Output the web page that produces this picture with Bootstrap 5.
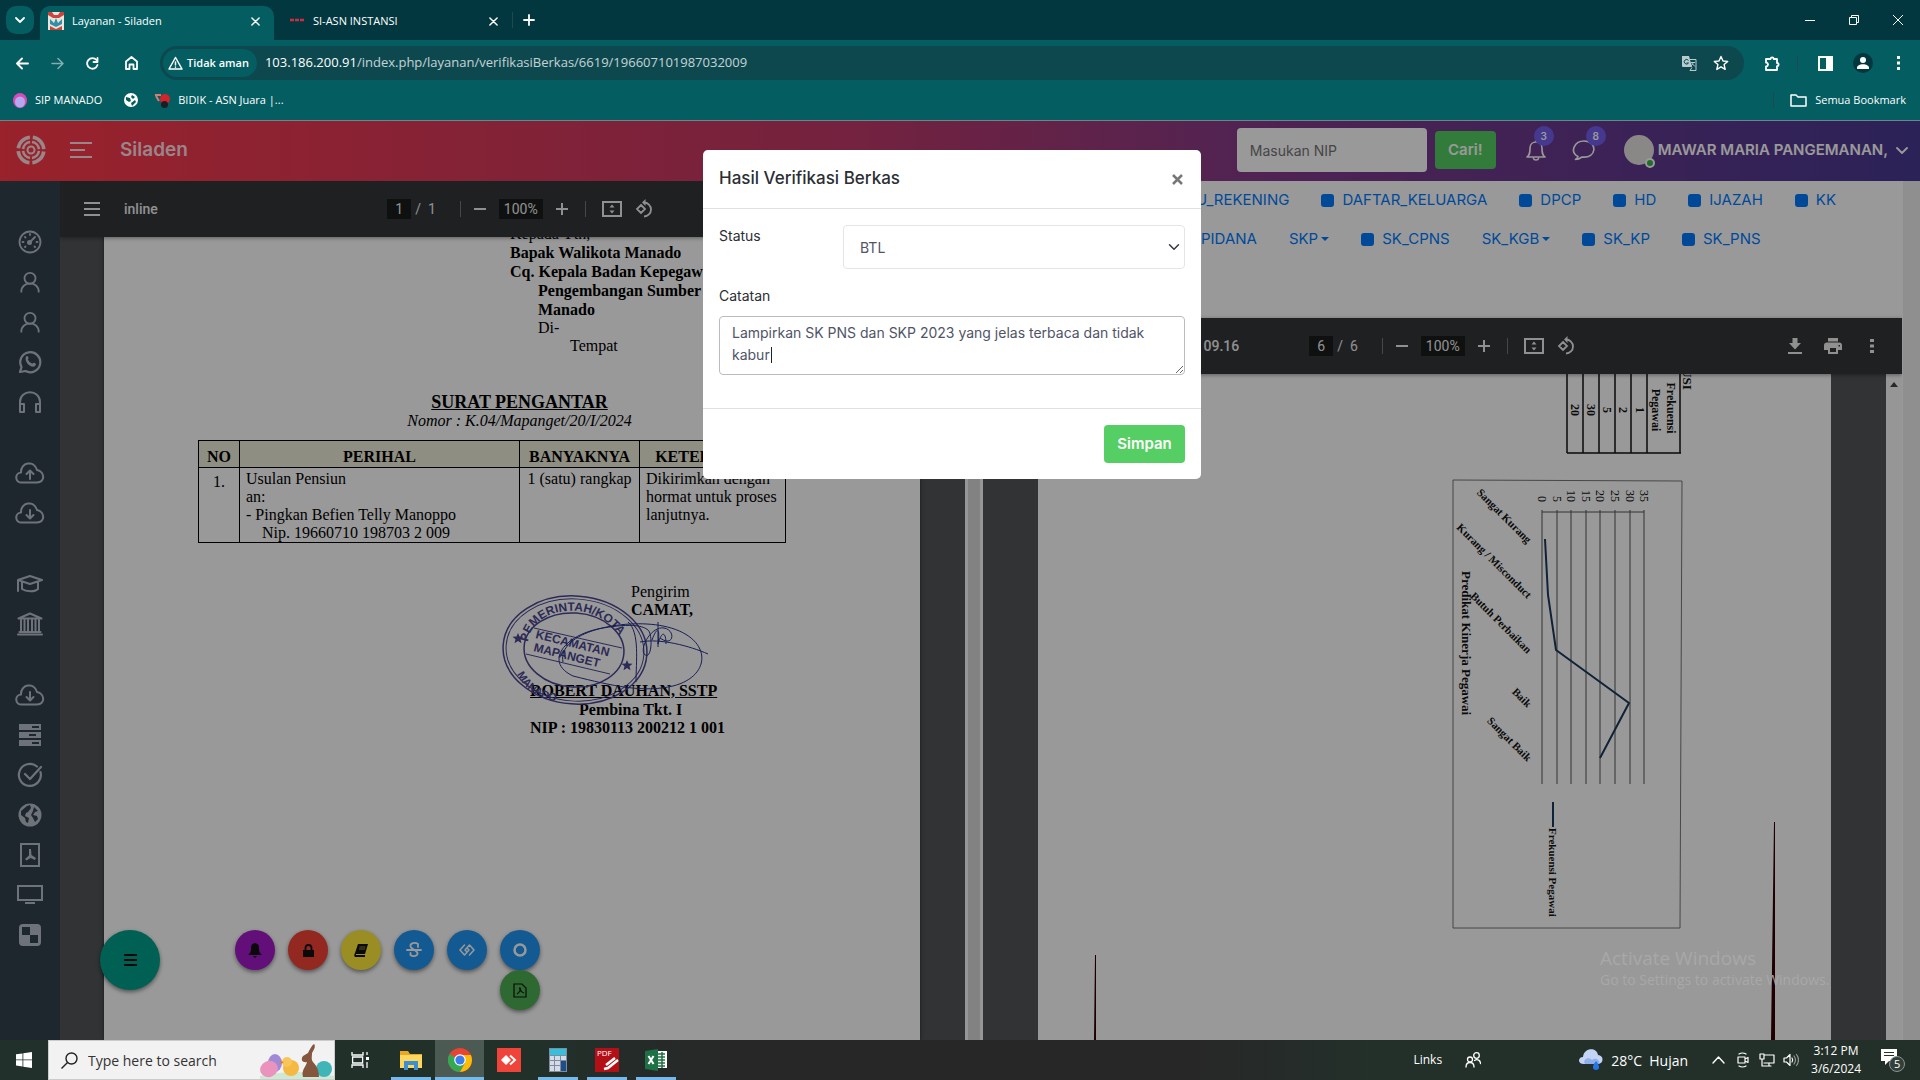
<!DOCTYPE html>
<html lang="id">
<head>
<meta charset="utf-8">
<meta name="viewport" content="width=device-width, initial-scale=1">
<title>Layanan - Siladen</title>
<link href="https://cdn.jsdelivr.net/npm/bootstrap@5.3.0/dist/css/bootstrap.min.css" rel="stylesheet">
<style>
body{font-family:Inter,"Liberation Sans",sans-serif;font-size:14px;overflow:hidden}
button{border:0;background:none;padding:0;color:inherit;display:inline-flex;align-items:center;justify-content:center}
a{text-decoration:none;color:inherit}
svg{display:block;flex:none}
.stroke{fill:none;stroke:currentColor;stroke-linecap:round;stroke-linejoin:round}
.ui{font-family:"Open Sans","Noto Sans",sans-serif;font-size:12px;color:#fff}
/* browser chrome */
.strip{height:40px;background:#03373f}
.tabmenu{width:28px;height:28px;border-radius:10px;background:#045d61;margin:6px 6px 6px 6px}
.tabpill{width:234px;height:34px;margin-top:6px;border-radius:10px 10px 0 0;padding:0 14px 4px 8px;font-size:11px}
.tabpill.on{background:#045d61}
.tabpill.off{width:238px}
.tools{height:40px;background:#045d61;padding:6px 19px 0 16px}
.nb{margin-left:22px}
.omni{height:34px;border-radius:17px;background:#0d484f;padding:0 15px 0 3px}
.chip{height:28px;border-radius:14px;background:#045d61;padding:0 8px 0 5px;font-size:11px;font-weight:600}
.url{font-size:13px}
.marks{height:41px;background:#045d61;border-bottom:1px solid #6d8588;padding:0 14px 0 13px;font-size:11px}
.bar1{width:1px;height:16px;background:#1d4a50}
/* application */
.appbar{height:60px;padding-bottom:2px;background:linear-gradient(90deg,#ff3a48 0,#c03a6a 45%,#843b8b 66%,#483993 100%);color:#fff}
.brand{font-size:19px;font-weight:600;color:#ffdfe4}
.nip{width:190px;height:44px;border:0;border-radius:4px;padding:0 13px;font-size:14px}
.cari{width:61px;height:38px;border-radius:4px;background:#55ce63;color:#fff;font-weight:600;font-size:15px}
.who{font-size:15px;font-weight:600}
.cnt{width:20px;height:20px;border-radius:50%;background:#7460ee;font-size:10px;font-weight:600;top:-20px;left:6px}
.face{width:30px;height:30px;border-radius:50%;background:#e6e3e0}
.dot{width:10px;height:10px;border-radius:50%;background:#39b54a;border:2px solid #fff;right:-1px;bottom:-3px}
.side{width:60px;background:#35414e;color:#b6c0c9;padding-top:41px;gap:31px}
.side a{height:40px;display:flex;align-items:center;justify-content:center}
.viewer{background:#525659;min-width:0;min-height:0}
.wide-l{flex:905 1 0}.wide-r{flex:919 1 0}
.pdfbar{height:56px;background:#323639;color:#f1f1f1;font-family:Roboto,sans-serif;font-size:14px;box-shadow:0 1px 4px #0006;flex:none}
.pdfbar .sidepart{flex:1 1 0;min-width:0}
.pbox{background:#191b1c;border:0;color:#f1f1f1;height:20px;text-align:center;font-size:14px;padding:0}
.pg{width:24px}.zm{width:44px;margin:0 8px 0 12px}
.pdfbar .sep{width:1px;height:16px;background:#777}
.docname{margin-right:70px}
.sheet{background:#fff;flex:none}
.letter{width:816px;margin-left:44px;font-family:"Liberation Serif",serif;font-size:16px;line-height:18px;color:#000;box-shadow:0 0 4px #0008}
.addrblock{margin-left:406px;line-height:19px;margin-top:-13px}
.in1{margin-left:28px}.in2{margin-left:60px}.in1.tight,.in2.tight{line-height:18px}
.lettitle{margin-top:38px;text-align:center;padding-left:15px}
.lettitle b{font-size:18px}
.lettable{width:588px;margin:10px 0 0 94px;border-collapse:collapse;table-layout:fixed}
.lettable th,.lettable td{border:1px solid #000;padding:0 6px;vertical-align:top;white-space:nowrap}
.lettable th{height:27px;padding-top:7px;background:#eeedd9;text-align:center;line-height:18px}
.lettable td{height:75px;line-height:18px;padding-top:2px}
.lettable td.num{padding-top:5px;text-align:center}
.c1{width:41px}.c2{width:280px}.c3{width:120px}
.sign{margin:40px 0 0 426px}
.sender{margin-left:101px}.signer{margin-top:63px}.rank{padding-left:49px;line-height:19px}
.stamp{left:-40px;top:-6px}
.fabs{left:100px;top:809px}
.fabrow{gap:13px;margin-left:75px}
.fab{width:40px;height:40px;border-radius:50%;box-shadow:0 2px 4px #0007;color:#111}
.fab.big{width:60px;height:60px;background:#00a08a}
.f-purple{background:#a31acb}.f-red{background:#f44336}.f-yellow{background:#ffeb3b}.f-blue{background:#2196f3;color:#fff}.f-green{background:#4caf50}
.split{width:18px;background:#fafafa}
.split div{width:12px;height:100%;background:#d9d9d9;margin-left:3px}
.doclinks{height:137px;background:#fff;color:#007bff;font-size:15px}
.doclinks .line{height:38px;gap:32px;padding-left:161px}
.doclinks .line.two{padding-left:218px;height:40px}
.doclinks a{display:inline-flex;align-items:center;gap:8px}
.doclinks i{width:13px;height:13px;border-radius:3px;background:#007bff}
.car::after{content:"";border:4px solid transparent;border-top-color:#007bff;border-bottom:0;margin-left:-5px}
.scan{margin-left:55px}
.sbar{width:16px;background:#fbfbfb}
.gutter{width:18px;background:#efefef;border-left:1px solid #fff}
.dim{inset:0;background:rgba(0,0,0,.4);z-index:5}
.layer{position:absolute;inset:0 16px auto 0;z-index:6}
.layer .modal-dialog{max-width:500px;margin-top:29px;padding:0 1px}
.modal-content{border:0;border-radius:5px;color:#2b2f33;background:#fff}
.modal-header,.modal-body,.modal-footer{padding:16px}
.modal-header{height:59px;border-bottom:1px solid #dee2e6;display:flex;justify-content:space-between}
.modal-title{font-size:17px;font-weight:500}
.modal-body{height:199px}
.modal-footer{height:71px;border-top:1px solid #dee2e6;display:flex;justify-content:flex-end}
.modal-footer button{margin:0;width:81px;height:38px;border-radius:4px;background:#55ce63;color:#fff;font-weight:600;font-size:15px}
.sel{width:342px;height:44px;font-size:14px;color:#4f5467;border-color:#e3e6e9;padding-left:16px;background-position:right 4px center;background-size:12px 12px;border-radius:4px}
.note{height:59px;font-size:14px;line-height:22px;color:#4f5467;border-color:#b9bcc0;padding:5px 12px;border-radius:4px;overflow:hidden}
.notewrap{margin-top:10px}
.cursor{width:1px;height:16px;background:#222;left:52px;top:31px}
.ghost{right:70px;bottom:49px;z-index:7;color:#a8a8a8;font-size:14px;width:250px;line-height:22px}
.ghost b{font-weight:400;font-size:19px;display:block}
/* taskbar */
.task{height:40px;background:linear-gradient(90deg,#21302a 0,#22302a 28%,#272727 38%,#272727 62%,#23302a 72%,#23302a 100%);font-size:12px}
.start{width:48px}
.find{width:287px;height:40px;background:#f2f2f2;color:#444;border:1px solid #ccc;padding-left:12px}
.find input{border:0;background:none;outline:0;width:150px;font-size:14px;color:#333}
.find input::placeholder{color:#333;opacity:1}
.app{width:49px;height:40px;border-bottom:3px solid transparent;padding-top:3px}
.app.view{margin-right:2px}
.app.run{background:linear-gradient(#76b9ed,#76b9ed) center bottom/40px 3px no-repeat border-box}
.app.now{background:#4b5b54;border-bottom-color:#76b9ed}
.temp{font-size:14px}
.time{font-size:12px;line-height:18px;margin-left:12px}
.g10{margin-left:10px}.g12{margin-left:12px}.g23{margin-left:23px}.g99{margin-left:98px}
.notif{margin:0 15px 0 20px}
</style>
<script src="https://cdn.jsdelivr.net/npm/bootstrap@5.3.0/dist/js/bootstrap.bundle.min.js"></script>
</head>
<body>
<svg width="0" height="0" class="position-absolute">
<defs>
<symbol id="x" viewBox="0 0 10 10"><path class="stroke" stroke-width="1.6" d="M1 1l8 8M9 1L1 9"/></symbol>
<symbol id="user" viewBox="0 0 24 24"><g class="stroke" stroke-width="2"><circle cx="12" cy="8" r="6"/><path d="M2.500 22.500c0-12 19-12 19 0"/></g></symbol>
<symbol id="cloud" viewBox="0 0 30 22"><path class="stroke" stroke-width="2" d="M7 20.500C-.5 20.500-.5 11 6 10.500 5.500.500 19-2.500 22 8c8 1.500 8.500 12.500 0 12.500z"/></symbol>
<symbol id="fit" viewBox="0 0 20 20"><path fill="none" stroke="currentColor" stroke-width="2" d="M1 3h18v14H1z"/><path fill="currentColor" d="M10 5.500l2.500 3h-5zM10 14.500l2.500-3h-5z"/></symbol>
<symbol id="rot" viewBox="0 0 20 20"><path fill="none" stroke="currentColor" stroke-width="1.800" d="M7 6l4 4-4 4-4-4zM10 3.500a7 7 0 1 1 0 14"/><path fill="currentColor" d="M11.500 0v7L8 3.500z"/></symbol>
</defs></svg>
<div class="d-flex flex-column vh-100">

<div class="ui">
 <div class="strip d-flex align-items-start">
  <button class="tabmenu" aria-label="Cari tab"><svg width="10" height="7" viewBox="0 0 10 7"><path class="stroke" stroke-width="1.800" d="M1 1l4 4 4-4"/></svg></button>
  <div class="tabpill on d-flex align-items-center">
   <svg width="16" height="18" viewBox="0 0 16 18"><path fill="#e8e6dc" d="M0 0h16v18H0z"/><path fill="#c9463f" d="M0 0h4l2 3h4l2-3h4v3l-5 3H5L0 3zM2 14l6 3 6-3v4H2z"/><path fill="#2f8fa8" d="M2 7l4 4 2-5 2 5 4-4v5l-6 3-6-3z"/></svg>
   <span class="ms-2 flex-grow-1">Layanan - Siladen</span><button aria-label="Tutup"><svg width="9" height="9"><use href="#x"/></svg></button></div>
  <div class="tabpill off d-flex align-items-center ps-3">
   <svg width="15" height="6" viewBox="0 0 15 6"><path stroke="#c8303f" stroke-width="2.500" stroke-dasharray="4 1" d="M0 2h15"/></svg>
   <span class="ms-2 flex-grow-1">SI-ASN INSTANSI</span><button aria-label="Tutup"><svg width="9" height="9"><use href="#x"/></svg></button></div>
  <span class="bar1 align-self-center"></span>
  <button class="align-self-center g10" aria-label="Tab baru"><svg width="12" height="12" viewBox="0 0 12 12"><path class="stroke" stroke-width="1.800" d="M6 1v10M1 6h10"/></svg></button>
  <div class="d-flex ms-auto align-self-center gap-4 pe-3">
   <button class="me-2" aria-label="Perkecil"><svg width="12" height="12" viewBox="0 0 12 12"><path stroke="#fff" d="M1 6.500h10"/></svg></button>
   <button class="me-2" aria-label="Pulihkan"><svg width="12" height="12" viewBox="0 0 12 12"><path fill="none" stroke="#fff" d="M1.500 3.500h7v7h-7zM3.500 3V1.500h7v7H9"/></svg></button>
   <button aria-label="Tutup jendela"><svg width="12" height="12" viewBox="0 0 12 12"><path stroke="#fff" d="M1 1l10 10M11 1L1 11"/></svg></button>
  </div>
 </div>
 <div class="tools d-flex align-items-center">
  <button aria-label="Kembali"><svg width="13" height="13" viewBox="0 0 13 13"><path class="stroke" stroke-width="1.800" d="M12 6.500H1.500M6 1.500l-5 5 5 5"/></svg></button>
  <button class="nb opacity-50" aria-label="Maju"><svg width="13" height="13" viewBox="0 0 13 13"><path class="stroke" stroke-width="1.500" d="M1 6.500h10.500M7 1.500l5 5-5 5"/></svg></button>
  <button class="nb" aria-label="Muat ulang"><svg width="13" height="13" viewBox="0 0 13 13"><path class="stroke" stroke-width="1.800" d="M11.500 8A5.300 5.300 0 1 1 10.500 3M11.500 1v4h-4"/></svg></button>
  <button class="nb ps-1" aria-label="Beranda"><svg width="13" height="14" viewBox="0 0 13 14"><path class="stroke" stroke-width="1.800" d="M1 13V5.500L6.500 1 12 5.500V13H8.500V8.500h-4V13z"/></svg></button>
  <div class="omni d-flex align-items-center flex-grow-1 nb">
   <span class="chip d-flex align-items-center gap-1"><svg width="15" height="14" viewBox="0 0 15 14"><path class="stroke" stroke-width="1.500" d="M7.500 1.500L14 13H1zM7.500 6v3M7.500 11v.2"/></svg>Tidak aman</span>
   <span class="url ms-2 flex-grow-1">103.186.200.91<span class="opacity-75">/index.php/layanan/verifikasiBerkas/6619/196607101987032009</span></span>
   <svg width="16" height="16" viewBox="0 0 16 16"><path fill="#b9cccd" d="M1 1h7l3 11H2a1 1 0 0 1-1-1z"/><path fill="none" stroke="#b9cccd" d="M8.500 4.500H15v11H9l2-3M10 7.500h4M12 7c0 2-1 3-2 4M11 8.500l3 3"/><path fill="none" stroke="#0d484f" d="M7.500 5.500A2.300 2.300 0 1 0 7.500 8H5.500"/></svg>
   <button class="ms-3" aria-label="Tandai"><svg width="16" height="16" viewBox="0 0 16 16"><path class="stroke" stroke-width="1.400" d="M8 1.500l2 4.500 4.700.400-3.600 3.200 1.100 4.800L8 11.800l-4.200 2.600 1.100-4.800L1.300 6.400 6 6z"/></svg></button>
  </div>
  <button class="ms-3 ps-1" aria-label="Ekstensi"><svg width="17" height="17" viewBox="0 0 17 17"><path class="stroke" stroke-width="1.800" d="M2 4h4.500a1.600 1.600 0 0 1 3.200 0H13v4a1.600 1.600 0 0 1 0 3.200V15H2v-3.500a2 2 0 0 0 0-4z"/></svg></button>
  <span class="bar1 ms-3 me-3"></span>
  <button class="ms-1" aria-label="Panel"><svg width="15" height="15" viewBox="0 0 15 15"><path fill="none" stroke="#fff" stroke-width="2" d="M1 1h13v13H1z"/><path fill="#fff" d="M8 1h6v13H8z"/></svg></button>
  <button class="ms-3 me-3 ps-1" aria-label="Profil"><svg width="20" height="20" viewBox="0 0 20 20"><circle cx="10" cy="10" r="10" fill="#03373f"/><circle cx="10" cy="7" r="3" fill="#fff"/><path fill="#fff" d="M4 15c0-5 12-5 12 0v1H4z"/></svg></button>
  <button class="ms-2" aria-label="Menu"><svg width="4" height="14" viewBox="0 0 4 14"><path fill="#fff" d="M0 0h3v3H0zM0 5.500h3v3H0zM0 11h3v3H0z"/></svg></button>
 </div>
 <div class="marks d-flex align-items-center">
  <svg width="14" height="15" viewBox="0 0 14 15"><ellipse cx="7" cy="7.500" rx="7" ry="7.500" fill="#d84bb9"/><ellipse cx="7" cy="9" rx="5" ry="5.500" fill="#b6a8ee"/></svg><a class="ms-2" href="#">SIP MANADO</a>
  <svg class="nb" width="14" height="14" viewBox="0 0 14 14"><circle cx="7" cy="7" r="7" fill="#fff"/><path fill="#045d61" d="M2 4l4 1 1 3-2 1-3-2zM8 2l3 2-2 2-2-2zM7 10l4-3 1 2-4 4z"/></svg>
  <svg class="ms-3" width="16" height="15" viewBox="0 0 16 15"><circle cx="11" cy="6" r="5" fill="#d3242b"/><path fill="none" stroke="#d77c74" stroke-width="2" d="M1 2h6M2 3l3 5"/><circle cx="10.500" cy="11.500" r="3.500" fill="#181e22"/></svg><a class="ms-2" href="#">BIDIK - ASN Juara |...</a>
  <span class="bar1 ms-auto me-3"></span>
  <svg width="17" height="13" viewBox="0 0 17 13"><path class="stroke" stroke-width="1.500" d="M1 1h5l2 2h8v9H1z"/></svg><a class="ms-2" href="#">Semua Bookmark</a>
 </div>
</div>

<div class="position-relative flex-grow-1 d-flex flex-column overflow-hidden">
 <header class="appbar d-flex align-items-center flex-shrink-0">
  <svg class="ms-3" width="30" height="30" viewBox="0 0 30 30" fill="none" stroke="#ffdfe4"><circle cx="15" cy="15" r="12.800" stroke-width="3.600" stroke-dasharray="17.100 3" stroke-dashoffset="-1.500"/><circle cx="15" cy="15" r="8" stroke-width="2.600" stroke-dasharray="10.500 2" stroke-dashoffset="-1"/><circle cx="15" cy="15" r="3.500" stroke-width="2"/></svg>
  <button class="ms-4" aria-label="Menu"><svg width="22" height="18" viewBox="0 0 22 18"><path stroke="#ffdfe4" stroke-width="2" d="M0 2h22M0 9h15M0 16h22"/></svg></button>
  <a class="brand ms-4 ps-1" href="#">Siladen</a>
  <form class="ms-auto d-flex align-items-center gap-2" onsubmit="return false"><input class="nip" placeholder="Masukan NIP" aria-label="Masukan NIP"><button class="cari">Cari!</button></form>
  <button class="position-relative ms-4 ps-1" aria-label="Notifikasi"><svg width="24" height="24" viewBox="0 0 24 24"><path class="stroke" stroke-width="1.600" d="M3 19c3-2 3-5 3-9 0-8 12-8 12 0 0 4 0 7 3 9zM9.500 20.500c.5 2 4.500 2 5 0M12 2v2"/></svg><span class="cnt position-absolute d-flex align-items-center justify-content-center ms-2 mt-2">3</span></button>
  <button class="position-relative ms-4" aria-label="Pesan"><svg width="24" height="24" viewBox="0 0 24 24"><path class="stroke" stroke-width="1.600" d="M6 18.500c-9-5-3-15.500 6-15.500 14 0 13 18-2 16-2 1.500-4 2.500-6.500 2.500C5 20.500 6 19.500 6 18.500z"/></svg><span class="cnt position-absolute d-flex align-items-center justify-content-center ms-2 mt-2">8</span></button>
  <a class="who d-flex align-items-center ms-4 me-2 ps-1" href="#"><span class="face position-relative me-1"><span class="dot position-absolute"></span></span>MAWAR MARIA PANGEMANAN,<svg class="ms-2 me-1" width="12" height="7" viewBox="0 0 12 7"><path class="stroke" stroke-width="1.800" d="M1 1l5 5 5-5"/></svg></a>
 </header>
 <div class="d-flex flex-grow-1 overflow-hidden">
  <nav class="side d-flex flex-column flex-shrink-0">
   <div>
    <a href="#" aria-label="Dasbor"><svg width="24" height="24" viewBox="0 0 24 24"><g class="stroke" stroke-width="1.800"><circle cx="12" cy="12" r="10.500"/><path d="M11 13l6-6M12 4v1M4.500 12h1M18.500 12h1M7 7l.5.5M7 17l.5-.5M17 17l-.5-.5"/></g><circle cx="11.500" cy="12.500" r="2.500" fill="currentColor"/></svg></a>
    <a href="#" aria-label="Pengguna"><svg width="22" height="22"><use href="#user"/></svg></a>
    <a href="#" aria-label="Pegawai"><svg width="22" height="22"><use href="#user"/></svg></a>
    <a href="#" aria-label="WhatsApp"><svg width="24" height="24" viewBox="0 0 24 24"><path class="stroke" stroke-width="2.200" d="M2 22l1.500-5A10 10 0 1 1 7.500 21z"/><path fill="currentColor" d="M8 6.500c1-1 2-.5 2.500 1.200.3 1-1 1.500-.5 2.300a8 8 0 0 0 4 3.500c.8.300 1.200-1 2-.7 2.500 1 2 1.500 1.500 2.700-3 4-12-3-9.500-9z"/></svg></a>
    <a href="#" aria-label="Bantuan"><svg width="24" height="24" viewBox="0 0 24 24"><path class="stroke" stroke-width="2" d="M2 22V12C2-1 22-1 22 12v10h-4v-8h4M2 14h4v8H2"/></svg></a>
   </div>
   <div>
    <a href="#" aria-label="Unggah"><svg width="30" height="22" viewBox="0 0 30 22"><use href="#cloud"/><path class="stroke" stroke-width="2" d="M15 17V9M11.500 12L15 8.500l3.500 3.500"/></svg></a>
    <a href="#" aria-label="Unduh"><svg width="30" height="22" viewBox="0 0 30 22"><use href="#cloud"/><path class="stroke" stroke-width="2" d="M15 8v8M11.500 13l3.500 3.500 3.500-3.500"/></svg></a>
   </div>
   <div>
    <a href="#" aria-label="Pendidikan"><svg width="28" height="18" viewBox="0 0 28 18"><path class="stroke" stroke-width="2" d="M2 5l12-4 12 4-12 4zM6 7v7c4 3 13 3 16 0V7M2 5v11"/></svg></a>
    <a href="#" aria-label="Instansi"><svg width="26" height="24" viewBox="0 0 26 24"><path class="stroke" stroke-width="2" d="M1.500 6.500L13 1.500l11.500 5zM4 8v11M7.500 8v11M11 8v11M15 8v11M18.500 8v11M22 8v11M2.500 20h21M1 22.500h24"/></svg></a>
   </div>
   <div>
    <a href="#" aria-label="Unduh berkas"><svg width="30" height="22" viewBox="0 0 30 22"><use href="#cloud"/><path class="stroke" stroke-width="2" d="M15 8v8M11.500 13l3.500 3.500 3.500-3.500"/></svg></a>
    <a href="#" aria-label="Server"><svg width="22" height="22" viewBox="0 0 22 22"><path fill="currentColor" fill-rule="evenodd" d="M0 0h22v6H0zM0 8h22v6H0zM0 16h22v6H0zM13 2v2h7V2zM10 10v2h7v-2zM13 18v2h7v-2z"/></svg></a>
    <a href="#" aria-label="Verifikasi"><svg width="26" height="26" viewBox="0 0 26 26"><path class="stroke" stroke-width="2.200" d="M23.500 10A11 11 0 1 1 20 4.500M8 12l5 5L24 5"/></svg></a>
    <a href="#" aria-label="Situs"><svg width="24" height="24" viewBox="0 0 24 24"><circle cx="12" cy="12" r="11.500" fill="currentColor"/><path fill="#35414e" d="M9 3l3-1 1 3-3 4-2 1-1 3 4 2-1 5-2-1-1-4-4-3 0-4zM16 4l4 4-3 1-2 3 4 1 1 3-3 3-2-4-2-3 2-4z"/></svg></a>
    <a href="#" aria-label="PDF"><svg width="20" height="24" viewBox="0 0 20 24"><path fill="none" stroke="currentColor" stroke-width="2" d="M1 1h18v22H1z"/><path fill="currentColor" d="M9 6h2l.5 6 4.500 3-1 2-4.500-2-4 2.500-1.500-1.500 4-3.500z"/></svg></a>
    <a href="#" aria-label="Monitor"><svg width="26" height="20" viewBox="0 0 26 20"><path fill="none" stroke="currentColor" stroke-width="2" d="M1 1h24v14H1zM8 18h10"/></svg></a>
    <a href="#" aria-label="Modul"><svg width="22" height="22" viewBox="0 0 22 22"><rect width="22" height="22" rx="4" fill="currentColor"/><path fill="#35414e" d="M3 3h8v8H3zM11 11h8v8h-8z"/></svg></a>
   </div>
  </nav>
  <!-- left document -->
  <section class="viewer wide-l d-flex flex-column position-relative overflow-hidden">
   <div class="pdfbar d-flex align-items-center position-relative z-1">
    <div class="sidepart d-flex align-items-center"><svg class="ms-4" width="16" height="14" viewBox="0 0 16 14"><path stroke="currentColor" stroke-width="2" d="M0 1h16M0 7h16M0 13h16"/></svg><span class="ms-4 fw-medium">inline</span></div>
    <div class="d-flex align-items-center ms-3"><input class="pbox pg" value="1" aria-label="Halaman"><span class="ms-1">/&nbsp; 1</span><span class="sep ms-4"></span>
     <button class="ms-2 ps-1" aria-label="Perkecil"><svg width="14" height="14" viewBox="0 0 14 14"><path stroke="currentColor" stroke-width="2" d="M1 7h12"/></svg></button>
     <input class="pbox zm" value="100%" aria-label="Zoom"><button class="ps-1" aria-label="Perbesar"><svg width="14" height="14" viewBox="0 0 14 14"><path stroke="currentColor" stroke-width="2" d="M1 7h12M7 1v12"/></svg></button>
     <span class="sep ms-3"></span><button class="ms-3" aria-label="Pas"><svg width="20" height="20"><use href="#fit"/></svg></button><button class="g12" aria-label="Putar"><svg width="20" height="20"><use href="#rot"/></svg></button></div>
    <div class="sidepart"></div>
   </div>
   <div class="sheet letter flex-grow-1">
    <div class="addrblock">Kepada Yth,<div class="fw-bold">Bapak Walikota Manado<br>Cq. Kepala Badan Kepegaw</div><div class="fw-bold in1">Pengembangan Sumber<br>Manado</div><div class="in1 tight">Di-</div><div class="in2 tight">Tempat</div></div>
    <div class="lettitle"><b class="text-decoration-underline">SURAT PENGANTAR</b><br><i>Nomor : K.04/Mapanget/20/I/2024</i></div>
    <table class="lettable"><colgroup><col class="c1"><col class="c2"><col class="c3"><col></colgroup>
     <tr><th>NO</th><th>PERIHAL</th><th>BANYAKNYA</th><th>KETERANGAN</th></tr>
     <tr><td class="num">1.</td><td>Usulan Pensiun<br>an:<br>- Pingkan Befien Telly Manoppo<br><span class="ms-3">Nip. 19660710 198703 2 009</span></td><td class="text-center">1 (satu) rangkap</td><td>Dikirimkan dengan<br>hormat untuk proses<br>lanjutnya.</td></tr></table>
    <div class="sign position-relative">
     <div class="sender">Pengirim<br><b>CAMAT,</b></div>
     <div class="fw-bold signer"><u>ROBERT DAUHAN, SSTP</u><div class="rank">Pembina Tkt. I</div>NIP : 19830113 200212 1 001</div>
     <svg class="stamp position-absolute" width="240" height="140" viewBox="490 575 240 140" fill="none" stroke="#4a4690" font-family="Liberation Sans" font-weight="bold">
      <defs><path id="arcB" d="M517 672C530 698 560 706 600 697"/></defs>
      <ellipse cx="575" cy="648" rx="72" ry="54" transform="rotate(4 575 648)" stroke-width="1.500"/><ellipse cx="575" cy="648" rx="69" ry="51" transform="rotate(4 575 648)" stroke-width="1"/><ellipse cx="574" cy="648" rx="50" ry="37" transform="rotate(4 574 648)" stroke-width="1.500"/>
      <path d="M534 626l88 20M526 652l84 20"/>
      <g fill="#4a4690" stroke="none"><path id="arcP" d="M528 640C532 598 622 590 632 668" fill="none"/><text font-size="12"><textPath href="#arcP">PEMERINTAH/KOTA</textPath></text><text font-size="11"><textPath href="#arcB">MANADO</textPath></text><text font-size="12" transform="translate(535 636) rotate(14)">KECAMATAN</text><text font-size="12" transform="translate(533 649) rotate(14)">MAPANGET</text><path d="M518 631l1.500 3.500 4 .200-3 2.600 1 4-3.500-2.200-3.500 2.200 1-4-3-2.600 4-.200zM627 658l1.500 3.500 4 .200-3 2.600 1 4-3.500-2.200-3.500 2.200 1-4-3-2.600 4-.200z"/></g>
      <path stroke="#28338c" d="M563 660c-6-30 60-44 100-36 50 10 50 50 10 60-30 7-60 0-100-10-30-14-8-42 30-48 30-5 40-2 45 2s4 32-4 24c-4-8 8-28 20-26s10 20-4 10M658 620v25M652 638c6-16 8-10 6 4 4-14 8-12 8 0M640 640c20-4 50 4 68 12M628 620c12 10 8 40 8 60"/>
     </svg>
    </div>
   </div>
  </section>
  <div class="split flex-shrink-0"><div></div></div>
  <!-- right document -->
  <section class="wide-r d-flex flex-column overflow-hidden">
   <nav class="doclinks flex-shrink-0">
    <div class="line d-flex align-items-center"><a href="#"><i></i>BUKU_REKENING</a><a href="#"><i></i>DAFTAR_KELUARGA</a><a href="#"><i></i>DPCP</a><a href="#"><i></i>HD</a><a href="#"><i></i>IJAZAH</a><a href="#"><i></i>KK</a></div>
    <div class="line two d-flex align-items-center"><a href="#">PIDANA</a><a class="car" href="#">SKP</a><a href="#"><i></i>SK_CPNS</a><a class="car" href="#">SK_KGB</a><a href="#"><i></i>SK_KP</a><a href="#"><i></i>SK_PNS</a></div>
   </nav>
   <div class="pdfbar d-flex align-items-center position-relative z-1">
    <div class="sidepart text-end fw-medium"><span class="docname">09.16</span></div>
    <div class="d-flex align-items-center"><input class="pbox pg" value="6" aria-label="Halaman"><span class="ms-1">/&nbsp; 6</span><span class="sep ms-4"></span>
     <button class="ms-2 ps-1" aria-label="Perkecil"><svg width="14" height="14" viewBox="0 0 14 14"><path stroke="currentColor" stroke-width="2" d="M1 7h12"/></svg></button>
     <input class="pbox zm" value="100%" aria-label="Zoom"><button class="ps-1" aria-label="Perbesar"><svg width="14" height="14" viewBox="0 0 14 14"><path stroke="currentColor" stroke-width="2" d="M1 7h12M7 1v12"/></svg></button>
     <span class="sep ms-3"></span><button class="ms-3" aria-label="Pas"><svg width="20" height="20"><use href="#fit"/></svg></button><button class="g12" aria-label="Putar"><svg width="20" height="20"><use href="#rot"/></svg></button></div>
    <div class="sidepart d-flex justify-content-end align-items-center">
     <button aria-label="Unduh"><svg width="14" height="16" viewBox="0 0 14 16"><path fill="currentColor" d="M4.500 0h5v5H13l-6 6.500L1 5h3.500zM0 14h14v2H0z"/></svg></button>
     <button class="nb me-4" aria-label="Cetak"><svg width="18" height="16" viewBox="0 0 18 16"><path fill="currentColor" fill-rule="evenodd" d="M4 0h10v3.500H4zM3 4.500h12a3 3 0 0 1 3 3V12h-4v4H4v-4H0V7.500a3 3 0 0 1 3-3zM6 10v4h6v-4zM14.500 7v1.500H16V7z"/></svg></button>
     <button class="ms-1 me-4 pe-1" aria-label="Lainnya"><svg width="4" height="14" viewBox="0 0 4 14"><path fill="currentColor" d="M0 0h4v3H0zM0 5.500h4v3H0zM0 11h4v3H0z"/></svg></button></div>
   </div>
   <div class="viewer d-flex flex-grow-1 overflow-hidden">
    <svg class="sheet scan" width="793" height="666" viewBox="1038 374 793 666" font-family="Liberation Serif" font-size="12" font-weight="bold" fill="#111">
     <g fill="none" stroke="#111" stroke-width="1.500"><path d="M1567 374v79M1583 374v79M1599 374v79M1615 374v79M1631 374v79M1647 374v79M1680 374v79M1567 453h114"/></g>
     <g text-anchor="middle"><text transform="translate(1683 379) rotate(90)" font-size="13">USI</text><text transform="translate(1667 408) rotate(90)">Frekuensi</text><text transform="translate(1652 410) rotate(90)">Pegawai</text><text transform="translate(1636 410) rotate(90)">1</text><text transform="translate(1619 410) rotate(90)">2</text><text transform="translate(1603 410) rotate(90)">5</text><text transform="translate(1587 410) rotate(90)">30</text><text transform="translate(1571 410) rotate(90)">20</text></g>
     <path fill="none" stroke="#777" d="M1453 480l229 1-2 447h-227z"/>
     <path fill="none" stroke="#555" d="M1542 510v274M1557 510v274M1571 510v274M1586 510v274M1600 510v274M1615 510v274M1630 510v274M1644 510v274M1542 512h102"/>
     <path fill="none" stroke="#1c3a5c" stroke-width="2" d="M1545 539l3 56 8 55 73 53-29 55M1553 802v25"/>
     <g text-anchor="end" font-size="12" font-weight="normal"><text transform="translate(1538 502) rotate(90)">0</text><text transform="translate(1553 502) rotate(90)">5</text><text transform="translate(1567 502) rotate(90)">10</text><text transform="translate(1582 502) rotate(90)">15</text><text transform="translate(1596 502) rotate(90)">20</text><text transform="translate(1611 502) rotate(90)">25</text><text transform="translate(1626 502) rotate(90)">30</text><text transform="translate(1640 502) rotate(90)">35</text></g>
     <g text-anchor="end" font-size="11"><text transform="translate(1527 544) rotate(45)">Sangat Kurang</text><text transform="translate(1527 599) rotate(45)">Kurang / Misconduct</text><text transform="translate(1527 654) rotate(45)">Butuh Perbaikan</text><text transform="translate(1527 708) rotate(45)">Baik</text><text transform="translate(1527 762) rotate(45)">Sangat Baik</text></g>
     <text transform="translate(1462 571) rotate(90)" font-size="13">Predikat Kinerja Pegawai</text><text transform="translate(1549 828) rotate(90)" font-size="11">Frekuensi Pegawai</text>
     <path fill="#300" d="M1774 822h1v218h-4zM1095 955h1v85h-2z"/>
    </svg>
    <div class="sbar ms-auto flex-shrink-0 d-flex justify-content-center"><svg class="mt-2" width="8" height="5" viewBox="0 0 8 5"><path fill="#444" d="M4 0l4 5H0z"/></svg></div>
   </div>
  </section>
  <div class="gutter flex-shrink-0"></div>
 </div>
 <div class="fabs position-absolute d-flex align-items-start">
  <button class="fab big" aria-label="Menu cepat"><svg width="13" height="12" viewBox="0 0 13 12"><path stroke="#111" stroke-width="2" d="M0 1h13M0 6h13M0 11h13"/></svg></button>
  <div class="d-flex fabrow">
   <button class="fab f-purple" aria-label="Notifikasi"><svg width="14" height="15" viewBox="0 0 14 15"><path fill="#111" d="M7 0c4 1 4 3 4 6 0 3 1 4 3 6H0c2-2 3-3 3-6 0-3 0-5 4-6zM5 13h4l-2 2z"/></svg></button>
   <button class="fab f-red" aria-label="Kunci"><svg width="11" height="13" viewBox="0 0 11 13"><path fill="#111" d="M0 6h11v7H0z"/><path fill="none" stroke="#111" stroke-width="1.800" d="M2.500 6V4a3 3 0 0 1 6 0v2"/></svg></button>
   <button class="fab f-yellow" aria-label="Buku"><svg width="14" height="13" viewBox="0 0 14 13"><path fill="#111" d="M4 0h10l-3 10H2v1h9v2H1c-1-1-1-2 0-4z"/><path stroke="#998d23" d="M5.500 3h6M5 5h6"/></svg></button>
   <button class="fab f-blue" aria-label="Coret"><svg width="16" height="16" viewBox="0 0 16 16"><path class="stroke" stroke-width="1.800" d="M12 5V2C9 0 4 1 4.500 4.500 5 7 11 8 11.500 11S7 15 4.500 13v-2M1 8h14"/></svg></button>
   <button class="fab f-blue" aria-label="Kode"><svg width="16" height="12" viewBox="0 0 16 12"><path class="stroke" stroke-width="1.500" d="M5.500 1L1 6l4.500 5L10 6 8 4M10.500 11L15 6l-4.500-5L6 6l2 2"/></svg></button>
   <div class="d-flex flex-column"><button class="fab f-blue" aria-label="Lingkaran"><svg width="14" height="14" viewBox="0 0 14 14"><circle class="stroke" stroke-width="2.500" cx="7" cy="7" r="5.500"/></svg></button>
   <button class="fab f-green" aria-label="Berkas PDF"><svg width="14" height="15" viewBox="0 0 14 15"><path fill="none" stroke="#111" stroke-width="1.200" d="M1 1h8l4 4v9H1zM4 11c3-2 4-5 3-6s0 4 4 5"/></svg></button></div>
  </div>
 </div>
 <div class="dim position-absolute"></div>
 <div class="layer">
  <div class="modal-dialog"><form class="modal-content" onsubmit="return false">
   <div class="modal-header align-items-start"><h5 class="modal-title">Hasil Verifikasi Berkas</h5><button class="mt-2" aria-label="Tutup dialog"><svg width="13" height="11" viewBox="0 0 13 11"><path stroke="#777" stroke-width="2.500" d="M1 1l9 9M10 1l-9 9"/></svg></button></div>
   <div class="modal-body"><div class="d-flex justify-content-between"><label for="st">Status</label><select id="st" class="form-select sel"><option>BTL</option></select></div>
    <label for="ct" class="mt-3 d-block">Catatan</label><div class="notewrap position-relative"><textarea id="ct" class="form-control note">Lampirkan SK PNS dan SKP 2023 yang jelas terbaca dan tidak kabur</textarea><span class="cursor position-absolute"></span></div></div>
   <div class="modal-footer"><button>Simpan</button></div>
  </form></div>
 </div>
 <div class="ghost position-absolute ui"><b>Activate Windows</b>Go to Settings to activate Windows.</div>
</div>

<footer class="task ui d-flex align-items-center flex-shrink-0">
 <button class="start" aria-label="Mulai"><svg width="16" height="16" viewBox="0 0 16 16"><path fill="#fff" d="M0 2.300l6.500-.9v6.100H0zM7.300 1.300L16 0v7.500H7.300zM0 8.300h6.500v6.200L0 13.600zM7.300 8.300H16V16l-8.700-1.200z"/></svg></button>
 <div class="find d-flex align-items-center justify-content-between"><svg width="17" height="17" viewBox="0 0 17 17"><g fill="none" stroke="#222" stroke-width="1.400"><circle cx="10.500" cy="6.500" r="5.500"/><path d="M6.500 10.500l-6 6"/></g></svg><input class="ms-2 me-auto" placeholder="Type here to search" aria-label="Cari">
  <svg class="align-self-end" width="74" height="36" viewBox="0 0 74 36"><path fill="#cfe8d4" d="M0 33q36-8 74 0v3H0z"/><ellipse cx="15" cy="20" rx="7" ry="9" fill="#a08ad8"/><ellipse cx="9" cy="26" rx="9" ry="8" fill="#ea93bd" transform="rotate(-25 9 26)"/><circle cx="31" cy="25" r="8" fill="#f5b942"/><circle cx="27" cy="19" r="5" fill="#f7c65a"/><path fill="#e8762c" d="M20 18l4 1-3 2z"/><ellipse cx="64" cy="26" rx="8" ry="8" fill="#3fb5b8"/><path fill="#83563d" d="M43 34c-2-7 3-10 4-15-4 1-7-2-4-6l5-3c2-4 4-8 6-9 2 2 0 6-2 9 0 4-1 6 1 9 4 4 6 9 6 15z"/></svg></div>
 <button class="app view" aria-label="Tampilan tugas"><svg width="18" height="16" viewBox="0 0 18 16"><path fill="none" stroke="#fff" stroke-width="1.300" d="M1 0v3h11V0M1 16v-3h11v3M1.600 5h10v6h-10zM16 0v3M16 10v6"/><path fill="#fff" d="M15 5h3v3h-3z"/></svg></button>
 <button class="app run" aria-label="Explorer"><svg width="22" height="20" viewBox="0 0 22 20"><path fill="#e9a825" d="M0 1h8l2 3h12v14H0z"/><path fill="#ffd75e" d="M0 5h22v13H0z"/><path fill="#3c8fd0" d="M4 11h14v9h-4v-5H8v5H4z"/></svg></button>
 <button class="app now" aria-label="Chrome"><svg width="24" height="24" viewBox="0 0 24 24"><circle cx="12" cy="12" r="12" fill="#e84335"/><path fill="#34a853" d="M12 12L1.600 6A12 12 0 0 0 12 24l5-9z"/><path fill="#fbbc05" d="M12 7h10.900A12 12 0 0 1 12 24l5-9z"/><circle cx="12" cy="12" r="5.800" fill="#fff"/><circle cx="12" cy="12" r="4.600" fill="#3b7ded"/></svg></button>
 <button class="app" aria-label="AnyDesk"><svg width="24" height="24" viewBox="0 0 24 24"><path fill="#f0433a" d="M0 0h24v24H0z"/><path fill="#fff" d="M4 12l5-5 5 5-5 5z"/><path fill="none" stroke="#fff" stroke-width="2" d="M13 7.500l5 4.500-5 4.500"/></svg></button>
 <button class="app run" aria-label="Kalkulator"><svg width="18" height="24" viewBox="0 0 18 24"><path fill="#7f8ca0" d="M0 0h18v24H0z"/><path fill="#35c1dc" d="M1 1h16v6H1z"/><path fill="#d5dce6" d="M1 8h4v4H1zM6 8h5v4H6zM12 8h5v4h-5zM1 13h4v4H1zM6 13h5v4H6zM1 18h4v5H1zM6 18h5v5H6z"/><path fill="#1d4e89" d="M12 13h5v10h-5z"/></svg></button>
 <button class="app run" aria-label="PDF"><svg width="24" height="24" viewBox="0 0 24 24"><path fill="#b30f17" d="M0 0h24v24H0z"/><text x="2" y="8" font-size="8" fill="#fff">PDF</text><path fill="none" stroke="#fff" stroke-width="2.500" d="M9 21l4-1 10-8M11 17l9-7"/></svg></button>
 <button class="app run" aria-label="Excel"><svg width="22" height="22" viewBox="0 0 22 22"><path fill="#fff" d="M11 2h11v17H11z"/><path stroke="#1e7145" stroke-width="1.500" d="M13 5h7M13 8h7M13 11h7M13 14h7M13 17h7M17 3v16"/><path fill="#1e7145" d="M0 2l13-2v22L0 20z"/><path stroke="#fff" stroke-width="2" d="M3.500 7l5 8M8.500 7l-5 8"/></svg></button>
 <div class="ms-auto d-flex align-items-center">
  <span>Links</span><svg class="g23" width="16" height="16" viewBox="0 0 16 16"><g class="stroke" stroke-width="1.300"><circle cx="11.500" cy="3.500" r="2.800"/><circle cx="5" cy="7.500" r="2.500"/><path d="M1 15c0-6 8-6 8 0M9.500 8.500c3-2 6 0 6 3"/></g></svg>
  <svg class="g99" width="24" height="22" viewBox="0 0 24 22"><path fill="#c3d4f5" d="M5 15C-2 15-1 8 4 8c1-10 14-10 15-2 6 0 6 9 0 9z"/><path fill="#8fb0ea" d="M6 15c-3-5 4-8 7-4 3-3 9 0 7 4z"/><path fill="#2476e8" d="M17 12c5 6 3 9 0 9s-5-3 0-9z"/></svg>
  <span class="temp ms-2">28°C &nbsp;Hujan</span>
  <svg class="ms-4" width="13" height="8" viewBox="0 0 13 8"><path class="stroke" stroke-width="1.400" d="M1 7l5.500-6L12 7"/></svg>
  <svg class="g12" width="12" height="16" viewBox="0 0 12 16"><path class="stroke" stroke-width="1.200" d="M1 5h7v6H1zM8 7l3-1.500v5L8 9M2 2q3.500-2 7 0M2 14q3.500 2 7 0"/></svg>
  <svg class="g10" width="16" height="15" viewBox="0 0 16 15"><path class="stroke" stroke-width="1.200" d="M5 2h10v8H5M1 1h4v5H1zM3 6v7h9M10 10v3"/></svg>
  <svg class="ms-2" width="16" height="14" viewBox="0 0 16 14"><path class="stroke" stroke-width="1.200" d="M1 5h2.500L7 1.500v11L3.500 9H1zM9 5q1.500 2 0 4"/><path class="stroke opacity-50" stroke-width="1.200" d="M11 3q3 4 0 8M13.500 1.500q4 5.500 0 11"/></svg>
  <span class="time text-center">3:12 PM<br>3/6/2024</span>
  <button class="notif position-relative" aria-label="Notifikasi"><svg width="24" height="24" viewBox="0 0 24 24"><path fill="#fff" d="M0 1h16v12H8l-4 4v-4H0z"/><path stroke="#23302a" d="M3 4.500h10M3 7.500h10"/><circle cx="16" cy="16" r="7.500" fill="#333f3a" stroke="#8b9590"/><text x="13" y="20" font-size="11" fill="#fff">5</text></svg></button>
 </div>
</footer>
</div>
</body>
</html>
